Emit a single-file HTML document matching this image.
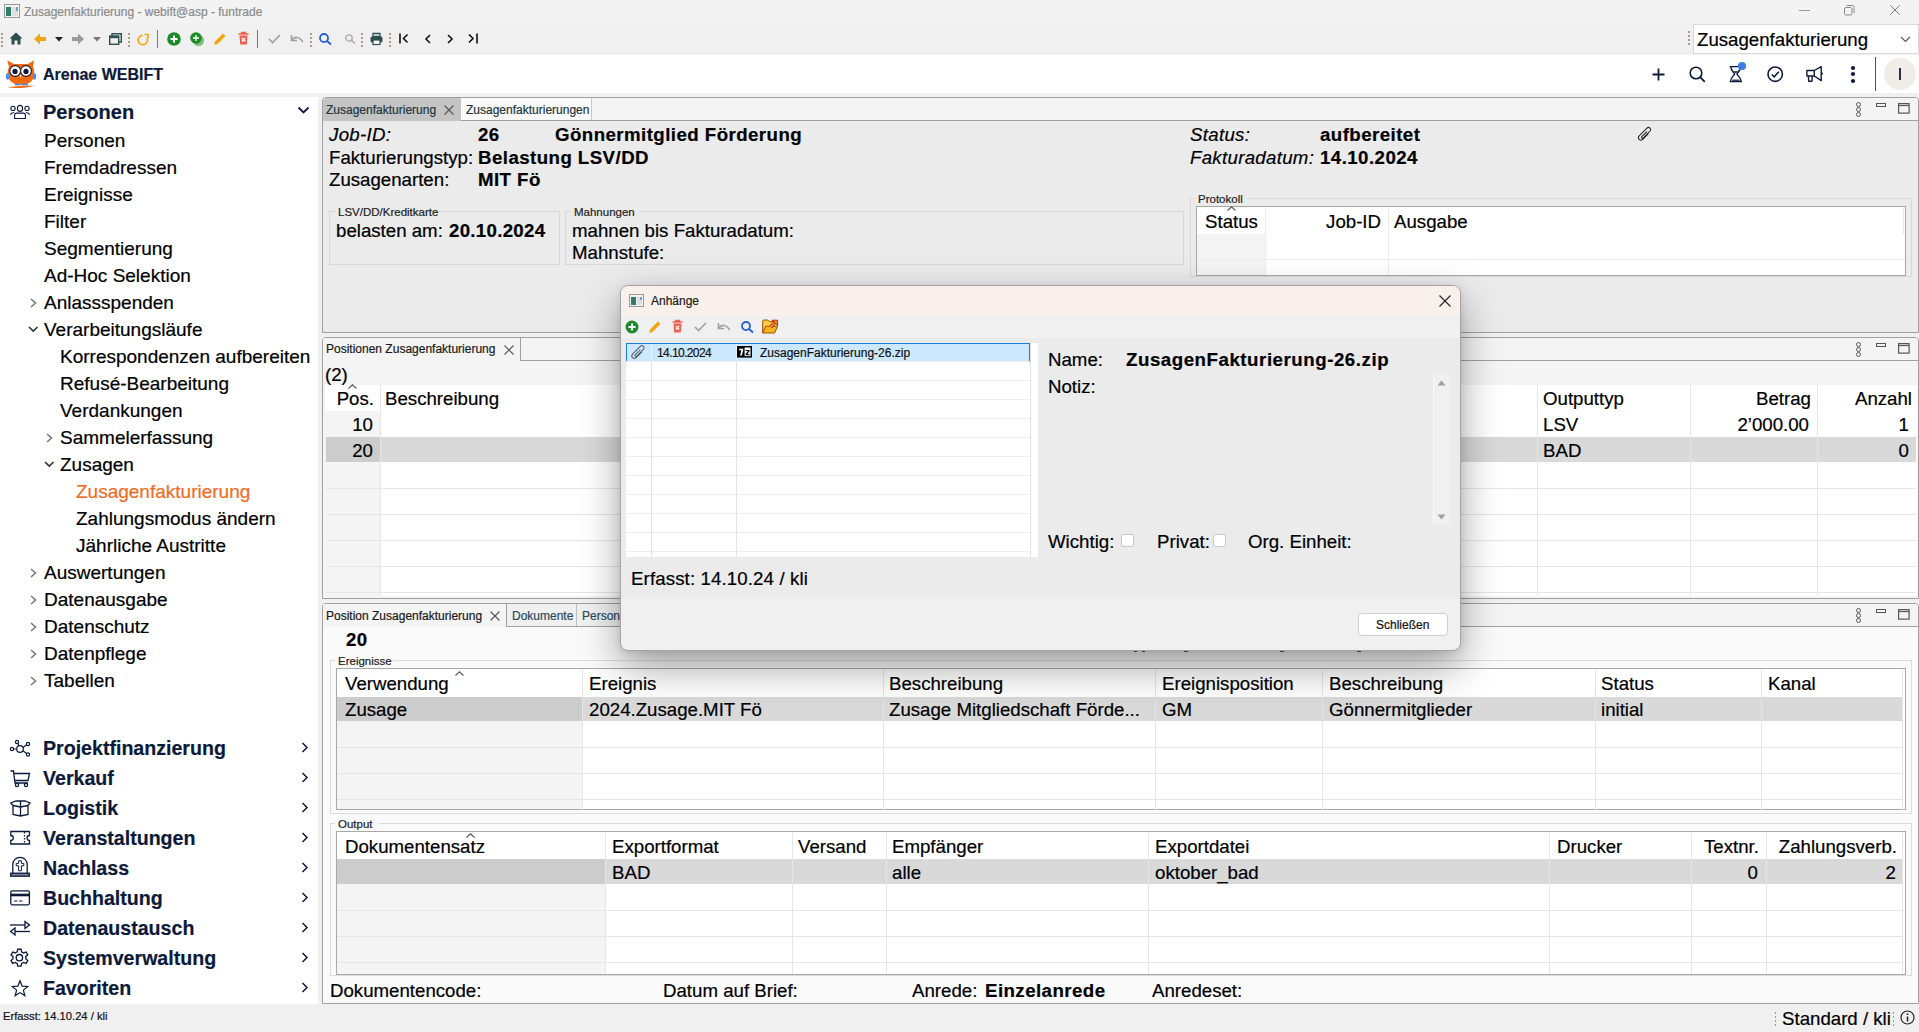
<!DOCTYPE html>
<html><head><meta charset="utf-8"><title>Zusagenfakturierung</title>
<style>
html,body{margin:0;padding:0;}
body{width:1919px;height:1032px;overflow:hidden;position:relative;background:#f0f0f0;font-family:"Liberation Sans",sans-serif;color:#000;}
.t{position:absolute;white-space:nowrap;line-height:20px;-webkit-text-stroke:0.2px currentColor;}
.r{position:absolute;}
svg.r{overflow:visible;}
</style></head><body>
<div class="r" style="left:0px;top:0px;width:1919px;height:23px;background:#f3f3f3;"></div>
<div class="r" style="left:0px;top:23px;width:1919px;height:32px;background:#f0f0f0;"></div>
<div class="r" style="left:0px;top:55px;width:1919px;height:38px;background:#ffffff;"></div>
<div class="r" style="left:0px;top:93px;width:1919px;height:4px;background:#f0f0f0;"></div>
<div class="r" style="left:0px;top:97px;width:318px;height:908px;background:#ffffff;"></div>
<div class="r" style="left:0px;top:1004px;width:1919px;height:28px;background:#f0f0f0;"></div>
<svg class="r" style="left:4px;top:4px;" width="16" height="14" viewBox="0 0 16 14"><rect x="0.5" y="0.5" width="15" height="13" fill="#f4f4f4" stroke="#999"/><rect x="2" y="3" width="5" height="9" fill="#2e7d6a"/><rect x="8" y="3" width="6" height="9" fill="#e0e0e0"/><rect x="12" y="3" width="2" height="4" fill="#6aa0d0"/></svg>
<div class="t" style="left:24px;top:2px;font-size:12px;color:#8a8a8a;">Zusagenfakturierung - webift@asp - funtrade</div>
<div class="r" style="left:1799px;top:10px;width:11px;height:1px;background:#9a9a9a;"></div>
<svg class="r" style="left:1843px;top:4px;" width="13" height="13" viewBox="0 0 13 13"><rect x="1.5" y="3.5" width="7.5" height="7.5" rx="1.5" fill="none" stroke="#8a8a8a"/><path d="M3.5 1.5H9.5a1.5 1.5 0 0 1 1.5 1.5V9" fill="none" stroke="#8a8a8a"/></svg>
<svg class="r" style="left:1890px;top:5px;" width="10" height="10" viewBox="0 0 10 10"><path d="M0.3 0.3L9.7 9.7M9.7 0.3L0.3 9.7" stroke="#7a7a7a" stroke-width="1"/></svg>
<svg class="r" style="left:10px;top:104px;" width="21" height="16" viewBox="0 0 21 16"><g fill="none" stroke="#0c1a3a" stroke-width="1.1"><circle cx="3" cy="4.4" r="2.1"/><ellipse cx="10" cy="4.4" rx="2.6" ry="3.0"/><circle cx="17" cy="4.4" r="2.1"/><path d="M0.6 10.8Q0.9 8.7 3.2 8.7H4.3"/><path d="M19.4 10.8Q19.1 8.7 16.8 8.7H15.7"/><path d="M4.6 14.5V11.2Q4.6 9.1 6.7 9.1H13.3Q15.4 9.1 15.4 11.2V14.5Z"/></g></svg>
<div class="t" style="left:43px;top:102px;font-size:20px;font-weight:700;color:#0c1a3a;">Personen</div>
<svg class="r" style="left:297px;top:106px;" width="14" height="9" viewBox="0 0 14 9"><path d="M1.5 1.5L6.5 6.5L11.5 1.5" fill="none" stroke="#0c1a3a" stroke-width="1.8"/></svg>
<div class="t" style="left:44px;top:131px;font-size:19px;">Personen</div>
<div class="t" style="left:44px;top:158px;font-size:19px;">Fremdadressen</div>
<div class="t" style="left:44px;top:185px;font-size:19px;">Ereignisse</div>
<div class="t" style="left:44px;top:212px;font-size:19px;">Filter</div>
<div class="t" style="left:44px;top:239px;font-size:19px;">Segmentierung</div>
<div class="t" style="left:44px;top:266px;font-size:19px;">Ad-Hoc Selektion</div>
<div class="t" style="left:44px;top:293px;font-size:19px;">Anlassspenden</div>
<svg class="r" style="left:30px;top:298px;" width="7.5" height="10" viewBox="0 0 7.5 10"><path d="M1 1L5.5 5.0L1 9" fill="none" stroke="#7a7a7a" stroke-width="1.6"/></svg>
<div class="t" style="left:44px;top:320px;font-size:19px;">Verarbeitungsläufe</div>
<svg class="r" style="left:28px;top:326px;" width="10.5" height="7" viewBox="0 0 10.5 7"><path d="M1 1L5.25 5L9.5 1" fill="none" stroke="#333" stroke-width="1.7"/></svg>
<div class="t" style="left:60px;top:347px;font-size:19px;">Korrespondenzen aufbereiten</div>
<div class="t" style="left:60px;top:374px;font-size:19px;">Refusé-Bearbeitung</div>
<div class="t" style="left:60px;top:401px;font-size:19px;">Verdankungen</div>
<div class="t" style="left:60px;top:428px;font-size:19px;">Sammelerfassung</div>
<svg class="r" style="left:46px;top:433px;" width="7.5" height="10" viewBox="0 0 7.5 10"><path d="M1 1L5.5 5.0L1 9" fill="none" stroke="#7a7a7a" stroke-width="1.6"/></svg>
<div class="t" style="left:60px;top:455px;font-size:19px;">Zusagen</div>
<svg class="r" style="left:44px;top:461px;" width="10.5" height="7" viewBox="0 0 10.5 7"><path d="M1 1L5.25 5L9.5 1" fill="none" stroke="#333" stroke-width="1.7"/></svg>
<div class="t" style="left:76px;top:482px;font-size:19px;color:#f26b1d;">Zusagenfakturierung</div>
<div class="t" style="left:76px;top:509px;font-size:19px;">Zahlungsmodus ändern</div>
<div class="t" style="left:76px;top:536px;font-size:19px;">Jährliche Austritte</div>
<div class="t" style="left:44px;top:563px;font-size:19px;">Auswertungen</div>
<svg class="r" style="left:30px;top:568px;" width="7.5" height="10" viewBox="0 0 7.5 10"><path d="M1 1L5.5 5.0L1 9" fill="none" stroke="#7a7a7a" stroke-width="1.6"/></svg>
<div class="t" style="left:44px;top:590px;font-size:19px;">Datenausgabe</div>
<svg class="r" style="left:30px;top:595px;" width="7.5" height="10" viewBox="0 0 7.5 10"><path d="M1 1L5.5 5.0L1 9" fill="none" stroke="#7a7a7a" stroke-width="1.6"/></svg>
<div class="t" style="left:44px;top:617px;font-size:19px;">Datenschutz</div>
<svg class="r" style="left:30px;top:622px;" width="7.5" height="10" viewBox="0 0 7.5 10"><path d="M1 1L5.5 5.0L1 9" fill="none" stroke="#7a7a7a" stroke-width="1.6"/></svg>
<div class="t" style="left:44px;top:644px;font-size:19px;">Datenpflege</div>
<svg class="r" style="left:30px;top:649px;" width="7.5" height="10" viewBox="0 0 7.5 10"><path d="M1 1L5.5 5.0L1 9" fill="none" stroke="#7a7a7a" stroke-width="1.6"/></svg>
<div class="t" style="left:44px;top:671px;font-size:19px;">Tabellen</div>
<svg class="r" style="left:30px;top:676px;" width="7.5" height="10" viewBox="0 0 7.5 10"><path d="M1 1L5.5 5.0L1 9" fill="none" stroke="#7a7a7a" stroke-width="1.6"/></svg>
<div class="t" style="left:43px;top:738px;font-size:19.6px;font-weight:700;color:#0c1a3a;">Projektfinanzierung</div>
<svg class="r" style="left:10px;top:740px;" width="21" height="18" viewBox="0 0 21 18"><g fill="none" stroke="#0c1a3a" stroke-width="1.2"><circle cx="10" cy="9" r="3.3"/><circle cx="7" cy="2" r="1.6"/><circle cx="18" cy="4" r="1.6"/><circle cx="2" cy="9" r="1.6"/><circle cx="18" cy="14.5" r="1.6"/><path d="M8 3.5L9 5.8M16.5 4.8L13 7.5M3.6 9H6.7M13 10.8L16.6 13.5"/></g></svg>
<svg class="r" style="left:301px;top:742px;" width="8" height="11" viewBox="0 0 8 11"><path d="M1.5 1L6 5.5L1.5 10" fill="none" stroke="#0c1a3a" stroke-width="1.5"/></svg>
<div class="t" style="left:43px;top:768px;font-size:19.6px;font-weight:700;color:#0c1a3a;">Verkauf</div>
<svg class="r" style="left:10px;top:770px;" width="21" height="18" viewBox="0 0 21 18"><g fill="none" stroke="#0c1a3a" stroke-width="1.3"><path d="M0.5 1H3.5L5 13H18"/><path d="M4 3.5H19.5L18 10.5H5"/><circle cx="7" cy="15" r="1.6"/><circle cx="16" cy="15" r="1.6"/></g></svg>
<svg class="r" style="left:301px;top:772px;" width="8" height="11" viewBox="0 0 8 11"><path d="M1.5 1L6 5.5L1.5 10" fill="none" stroke="#0c1a3a" stroke-width="1.5"/></svg>
<div class="t" style="left:43px;top:798px;font-size:19.6px;font-weight:700;color:#0c1a3a;">Logistik</div>
<svg class="r" style="left:10px;top:800px;" width="21" height="18" viewBox="0 0 21 18"><g fill="none" stroke="#0c1a3a" stroke-width="1.3"><path d="M3 5.5V14.5L10.5 16L18 14.5V5.5"/><path d="M10.5 7V16"/><path d="M3 5.5L0.8 3L6 1H10.5L15 1L20 3L18 5.5"/><path d="M3 5.5L10.5 7L18 5.5"/><path d="M10.5 1V7"/></g></svg>
<svg class="r" style="left:301px;top:802px;" width="8" height="11" viewBox="0 0 8 11"><path d="M1.5 1L6 5.5L1.5 10" fill="none" stroke="#0c1a3a" stroke-width="1.5"/></svg>
<div class="t" style="left:43px;top:828px;font-size:19.6px;font-weight:700;color:#0c1a3a;">Veranstaltungen</div>
<svg class="r" style="left:10px;top:830px;" width="21" height="18" viewBox="0 0 21 18"><g fill="none" stroke="#0c1a3a" stroke-width="1.3"><path d="M0.8 1.5H19.5V5.5A2.5 2.5 0 0 0 19.5 10.5V14H0.8V10.5A2.5 2.5 0 0 0 0.8 5.5Z"/><path d="M14.5 2V13.5" stroke-dasharray="1.5 1.5"/></g></svg>
<svg class="r" style="left:301px;top:832px;" width="8" height="11" viewBox="0 0 8 11"><path d="M1.5 1L6 5.5L1.5 10" fill="none" stroke="#0c1a3a" stroke-width="1.5"/></svg>
<div class="t" style="left:43px;top:858px;font-size:19.6px;font-weight:700;color:#0c1a3a;">Nachlass</div>
<svg class="r" style="left:10px;top:859px;" width="21" height="18" viewBox="0 0 21 18"><g fill="none" stroke="#0c1a3a" stroke-width="1.3"><path d="M2.8 14V5.5A7.2 7.2 0 0 1 17.2 5.5V14"/><rect x="0.7" y="14.2" width="18.6" height="3" fill="#0c1a3a" fill-opacity="0.55"/><path d="M8.6 1.8h2.8v2.6h2.4v2.4h-2.4v5h-2.8v-5H6.2V4.4h2.4z" stroke-width="1"/></g></svg>
<svg class="r" style="left:301px;top:862px;" width="8" height="11" viewBox="0 0 8 11"><path d="M1.5 1L6 5.5L1.5 10" fill="none" stroke="#0c1a3a" stroke-width="1.5"/></svg>
<div class="t" style="left:43px;top:888px;font-size:19.6px;font-weight:700;color:#0c1a3a;">Buchhaltung</div>
<svg class="r" style="left:10px;top:890px;" width="21" height="18" viewBox="0 0 21 18"><g fill="none" stroke="#0c1a3a" stroke-width="1.3"><rect x="0.8" y="0.8" width="18.6" height="14" rx="1.5"/><path d="M0.8 5H19.4" stroke-width="2.6"/><path d="M4 11H7.5M9 11H12.5" stroke-width="1"/></g></svg>
<svg class="r" style="left:301px;top:892px;" width="8" height="11" viewBox="0 0 8 11"><path d="M1.5 1L6 5.5L1.5 10" fill="none" stroke="#0c1a3a" stroke-width="1.5"/></svg>
<div class="t" style="left:43px;top:918px;font-size:19.6px;font-weight:700;color:#0c1a3a;">Datenaustausch</div>
<svg class="r" style="left:10px;top:920px;" width="21" height="18" viewBox="0 0 21 18"><g fill="none" stroke="#0c1a3a" stroke-width="1.3"><path d="M0 5H15"/><path d="M15 1.5L19.5 5L15 8.5Z"/><path d="M20 11.5H5"/><path d="M5 8L0.6 11.5L5 15Z"/></g></svg>
<svg class="r" style="left:301px;top:922px;" width="8" height="11" viewBox="0 0 8 11"><path d="M1.5 1L6 5.5L1.5 10" fill="none" stroke="#0c1a3a" stroke-width="1.5"/></svg>
<div class="t" style="left:43px;top:948px;font-size:19.6px;font-weight:700;color:#0c1a3a;">Systemverwaltung</div>
<svg class="r" style="left:10px;top:950px;" width="21" height="18" viewBox="0 0 21 18"><g fill="none" stroke="#0c1a3a" stroke-width="1.2" transform="translate(-1.6,-1.65) scale(1.1)"><path d="M8.5 0.8h3l0.5 2.4 1.8 1 2.3-0.9 1.5 2.6-1.8 1.6v2l1.8 1.6-1.5 2.6-2.3-0.9-1.8 1-0.5 2.4h-3l-0.5-2.4-1.8-1-2.3 0.9-1.5-2.6 1.8-1.6v-2L2.4 5.9 3.9 3.3l2.3 0.9 1.8-1z"/><circle cx="10" cy="8.5" r="2.9"/></g></svg>
<svg class="r" style="left:301px;top:952px;" width="8" height="11" viewBox="0 0 8 11"><path d="M1.5 1L6 5.5L1.5 10" fill="none" stroke="#0c1a3a" stroke-width="1.5"/></svg>
<div class="t" style="left:43px;top:978px;font-size:19.6px;font-weight:700;color:#0c1a3a;">Favoriten</div>
<svg class="r" style="left:10px;top:980px;" width="21" height="18" viewBox="0 0 21 18"><g fill="none" stroke="#0c1a3a" stroke-width="1.2"><path d="M10.00 0.80 L12.12 6.09 L17.80 6.47 L13.42 10.11 L14.82 15.63 L10.00 12.60 L5.18 15.63 L6.58 10.11 L2.20 6.47 L7.88 6.09Z"/></g></svg>
<svg class="r" style="left:301px;top:982px;" width="8" height="11" viewBox="0 0 8 11"><path d="M1.5 1L6 5.5L1.5 10" fill="none" stroke="#0c1a3a" stroke-width="1.5"/></svg>
<div class="r" style="left:1px;top:33px;width:2px;height:2px;background:#a89f8c;"></div>
<div class="r" style="left:1px;top:37px;width:2px;height:2px;background:#a89f8c;"></div>
<div class="r" style="left:1px;top:41px;width:2px;height:2px;background:#a89f8c;"></div>
<div class="r" style="left:1px;top:45px;width:2px;height:2px;background:#a89f8c;"></div>
<svg class="r" style="left:9px;top:32px;" width="14" height="13" viewBox="0 0 14 13"><path d="M7 0.5L0.5 6.5H2.5V12.5H5.5V8.5H8.5V12.5H11.5V6.5H13.5Z" fill="#2f4f4f"/></svg>
<svg class="r" style="left:34px;top:33px;" width="12" height="12" viewBox="0 0 12 12"><path d="M0 6L6 0.5V4H12V8H6V11.5Z" fill="#f5a30f"/></svg>
<svg class="r" style="left:55px;top:37px;" width="8" height="5" viewBox="0 0 8 5"><path d="M0 0H8L4 4.5Z" fill="#222"/></svg>
<svg class="r" style="left:72px;top:33px;" width="12" height="12" viewBox="0 0 12 12"><path d="M12 6L6 0.5V4H0V8H6V11.5Z" fill="#9a9a9a"/></svg>
<svg class="r" style="left:93px;top:37px;" width="8" height="5" viewBox="0 0 8 5"><path d="M0 0H8L4 4.5Z" fill="#777"/></svg>
<svg class="r" style="left:109px;top:33px;" width="13" height="12" viewBox="0 0 13 12"><g fill="none" stroke="#2f4f4f" stroke-width="1.4"><rect x="0.7" y="3" width="9" height="8.3"/><path d="M3 3V0.7H12.3V9H9.7"/></g><rect x="0.7" y="3" width="9" height="2.2" fill="#2f4f4f"/></svg>
<div class="r" style="left:128px;top:33px;width:2px;height:2px;background:#a89f8c;"></div>
<div class="r" style="left:128px;top:37px;width:2px;height:2px;background:#a89f8c;"></div>
<div class="r" style="left:128px;top:41px;width:2px;height:2px;background:#a89f8c;"></div>
<div class="r" style="left:128px;top:45px;width:2px;height:2px;background:#a89f8c;"></div>
<svg class="r" style="left:137px;top:33px;" width="13" height="13" viewBox="0 0 13 13"><path d="M5.8 2.3A4.7 4.7 0 1 0 9.9 4.7" fill="none" stroke="#f5a30f" stroke-width="1.5"/><path d="M7.6 1.5H11V4.9" fill="none" stroke="#f5a30f" stroke-width="1.5"/></svg>
<div class="r" style="left:157px;top:30px;width:1px;height:18px;background:#777;"></div>
<svg class="r" style="left:167px;top:32px;" width="14" height="14" viewBox="0 0 14 14"><circle cx="7" cy="7" r="6.8" fill="#1e8a2a"/><path d="M7 3.5V10.5M3.5 7H10.5" stroke="#fff" stroke-width="2"/></svg>
<svg class="r" style="left:190px;top:32px;" width="14" height="14" viewBox="0 0 14 14"><circle cx="8.5" cy="8.5" r="5.5" fill="#7cbf7c"/><circle cx="6" cy="6" r="5.8" fill="#1e8a2a"/><path d="M6 3V9M3 6H9" stroke="#fff" stroke-width="1.3"/></svg>
<svg class="r" style="left:213px;top:32px;" width="14" height="14" viewBox="0 0 14 14"><path d="M1 13L2 9.5L10 1.5L12.5 4L4.5 12Z" fill="#f5a30f"/></svg>
<svg class="r" style="left:238px;top:32px;" width="11" height="13" viewBox="0 0 11 13"><path d="M0.5 2H10.5M3.5 2V0.5H7.5V2" stroke="#f06050" stroke-width="1.3" fill="none"/><path d="M1.5 3.5H9.5L8.8 12.5H2.2Z" fill="#f06050"/><path d="M3.8 6L7.2 9.5M7.2 6L3.8 9.5" stroke="#fff" stroke-width="1.1"/></svg>
<div class="r" style="left:257px;top:30px;width:1px;height:18px;background:#777;"></div>
<svg class="r" style="left:268px;top:34px;" width="13" height="10" viewBox="0 0 13 10"><path d="M1 5L4.5 8.5L12 1" fill="none" stroke="#a0a0a0" stroke-width="1.6"/></svg>
<svg class="r" style="left:290px;top:34px;" width="14" height="10" viewBox="0 0 14 10"><path d="M1.5 1V6.5H7" fill="none" stroke="#a0a0a0" stroke-width="1.6"/><path d="M2 6C4 2.5 9.5 2 12.8 8" fill="none" stroke="#a0a0a0" stroke-width="1.6"/></svg>
<div class="r" style="left:310px;top:33px;width:2px;height:2px;background:#a89f8c;"></div>
<div class="r" style="left:310px;top:37px;width:2px;height:2px;background:#a89f8c;"></div>
<div class="r" style="left:310px;top:41px;width:2px;height:2px;background:#a89f8c;"></div>
<div class="r" style="left:310px;top:45px;width:2px;height:2px;background:#a89f8c;"></div>
<svg class="r" style="left:319px;top:33px;" width="13" height="12" viewBox="0 0 13 12"><circle cx="5" cy="5" r="4" fill="none" stroke="#2a5fd8" stroke-width="1.8"/><path d="M8 8L12 11.5" stroke="#2a5fd8" stroke-width="2"/></svg>
<svg class="r" style="left:345px;top:34px;" width="11" height="10" viewBox="0 0 11 10"><circle cx="4" cy="4" r="3.2" fill="none" stroke="#a8a8a8" stroke-width="1.3"/><path d="M6.5 6.5L10 9.5" stroke="#a8a8a8" stroke-width="1.5"/></svg>
<div class="r" style="left:361px;top:33px;width:2px;height:2px;background:#a89f8c;"></div>
<div class="r" style="left:361px;top:37px;width:2px;height:2px;background:#a89f8c;"></div>
<div class="r" style="left:361px;top:41px;width:2px;height:2px;background:#a89f8c;"></div>
<div class="r" style="left:361px;top:45px;width:2px;height:2px;background:#a89f8c;"></div>
<svg class="r" style="left:370px;top:33px;" width="13" height="12" viewBox="0 0 13 12"><path d="M3 0.5H10V3.5H3Z" fill="none" stroke="#2f4f4f" stroke-width="1.3"/><rect x="0.5" y="3.5" width="12" height="6" rx="1.5" fill="#2f4f4f"/><rect x="3" y="7" width="7" height="4.5" fill="#fff" stroke="#2f4f4f" stroke-width="1.2"/></svg>
<div class="r" style="left:389px;top:33px;width:2px;height:2px;background:#a89f8c;"></div>
<div class="r" style="left:389px;top:37px;width:2px;height:2px;background:#a89f8c;"></div>
<div class="r" style="left:389px;top:41px;width:2px;height:2px;background:#a89f8c;"></div>
<div class="r" style="left:389px;top:45px;width:2px;height:2px;background:#a89f8c;"></div>
<svg class="r" style="left:399px;top:33px;" width="10" height="11" viewBox="0 0 10 11"><path d="M1 0.5V10.5" stroke="#111" stroke-width="1.6"/><path d="M8.5 1.5L4.5 5.5L8.5 9.5" fill="none" stroke="#111" stroke-width="1.6"/></svg>
<svg class="r" style="left:424px;top:34px;" width="7" height="10" viewBox="0 0 7 10"><path d="M6 1L2 5L6 9" fill="none" stroke="#111" stroke-width="1.6"/></svg>
<svg class="r" style="left:447px;top:34px;" width="7" height="10" viewBox="0 0 7 10"><path d="M1 1L5 5L1 9" fill="none" stroke="#111" stroke-width="1.6"/></svg>
<svg class="r" style="left:468px;top:33px;" width="11" height="11" viewBox="0 0 11 11"><path d="M1 1.5L5 5.5L1 9.5" fill="none" stroke="#111" stroke-width="1.6"/><path d="M9 0.5V10.5" stroke="#111" stroke-width="1.6"/></svg>
<div class="r" style="left:1688px;top:31px;width:2px;height:2px;background:#a89f8c;"></div>
<div class="r" style="left:1688px;top:35px;width:2px;height:2px;background:#a89f8c;"></div>
<div class="r" style="left:1688px;top:39px;width:2px;height:2px;background:#a89f8c;"></div>
<div class="r" style="left:1688px;top:43px;width:2px;height:2px;background:#a89f8c;"></div>
<div class="r" style="left:1693px;top:24px;width:226px;height:30px;background:#ffffff;border:1px solid #d9d9d9;box-sizing:border-box;"></div>
<div class="t" style="left:1697px;top:30px;font-size:18.67px;">Zusagenfakturierung</div>
<svg class="r" style="left:1900px;top:36px;" width="11" height="7" viewBox="0 0 11 7"><path d="M1 1L5.5 5.5L10 1" fill="none" stroke="#555" stroke-width="1.1"/></svg>
<svg class="r" style="left:6px;top:59px;" width="30" height="30" viewBox="0 0 30 30">
<path d="M1.2 1.2L8 5H22L28 1.2L27 8C29 12 28.6 18 26.2 21.2C23.6 24.6 19 26 15 26C11 26 6.4 24.6 3.8 21.2C1.4 18 1 12 3 8Z" fill="#f26b11"/>
<ellipse cx="1.6" cy="17.5" rx="1.7" ry="3.3" fill="#4a8df0"/><ellipse cx="28.4" cy="17.5" rx="1.7" ry="3.3" fill="#4a8df0"/>
<circle cx="9.2" cy="12" r="5.4" fill="#fff" stroke="#1a1a30" stroke-width="1.1"/><circle cx="20" cy="12" r="5.4" fill="#fff" stroke="#1a1a30" stroke-width="1.1"/>
<circle cx="9" cy="12.4" r="2.6" fill="#0c1a3a"/><circle cx="20" cy="12.4" r="2.6" fill="#0c1a3a"/>
<path d="M13.6 16.2L14.6 19L15.6 16.2Z" fill="#fff"/>
<rect x="9" y="24.6" width="5" height="1.8" fill="#4a8df0"/><rect x="16" y="24.6" width="6" height="1.8" fill="#4a8df0"/>
<path d="M1 28.6C8 26.8 20 26.4 29 26.8C21 29 9 29.6 1 28.6Z" fill="#f26b11"/>
</svg>
<div class="t" style="left:43px;top:65px;font-size:16px;font-weight:700;color:#0c1a3a;">Arenae WEBIFT</div>
<svg class="r" style="left:1652px;top:68px;" width="13" height="13" viewBox="0 0 13 13"><path d="M6.5 0.5V12.5M0.5 6.5H12.5" stroke="#0c1a3a" stroke-width="1.8"/></svg>
<svg class="r" style="left:1689px;top:66px;" width="17" height="17" viewBox="0 0 17 17"><circle cx="7" cy="7" r="5.8" fill="none" stroke="#0c1a3a" stroke-width="1.6"/><path d="M11.2 11.2L15.8 15.8" stroke="#0c1a3a" stroke-width="1.8"/></svg>
<svg class="r" style="left:1729px;top:62px;" width="20" height="21" viewBox="0 0 20 21"><g fill="none" stroke="#0c1a3a" stroke-width="1.4"><path d="M0.8 4.6H12.5M0.8 19.6H13"/><path d="M1.8 4.6C2 9 5.3 10.6 5.6 12C5.3 13.4 2 15 1.3 19.6M11.6 4.6C11.4 9 8.3 10.6 8 12C8.3 13.4 11.6 15 12.3 19.6"/></g><path d="M4.3 9.3H9.3L6.8 11.3Z" fill="#0c1a3a"/><path d="M3 19H10.8L10.4 17.6H3.4Z" fill="#0c1a3a" fill-opacity="0.8"/><circle cx="13" cy="4" r="4.1" fill="#3b7fe6"/></svg>
<svg class="r" style="left:1767px;top:66px;" width="17" height="17" viewBox="0 0 17 17"><circle cx="8.2" cy="8.2" r="7.2" fill="none" stroke="#0c1a3a" stroke-width="1.6"/><path d="M4.8 8.5L7.2 10.8L11.8 5.8" fill="none" stroke="#0c1a3a" stroke-width="1.6"/></svg>
<svg class="r" style="left:1806px;top:66px;" width="18" height="17" viewBox="0 0 18 17"><g fill="none" stroke="#0c1a3a" stroke-width="1.4" stroke-linejoin="round"><path d="M0.9 4.5H8.3V10H0.9Z"/><path d="M8.3 4.5L15.2 0.7V14.7L8.3 10"/><path d="M2.4 10L2.7 15.2H6L6.2 10"/></g><circle cx="15.9" cy="7.6" r="1.1" fill="#0c1a3a"/></svg>
<svg class="r" style="left:1850px;top:64.6px;" width="6" height="6" viewBox="0 0 6 6"><circle cx="3" cy="3" r="2.1" fill="#0c1a3a"/></svg>
<svg class="r" style="left:1850px;top:71.19999999999999px;" width="6" height="6" viewBox="0 0 6 6"><circle cx="3" cy="3" r="2.1" fill="#0c1a3a"/></svg>
<svg class="r" style="left:1850px;top:77.8px;" width="6" height="6" viewBox="0 0 6 6"><circle cx="3" cy="3" r="2.1" fill="#0c1a3a"/></svg>
<div class="r" style="left:1875px;top:57px;width:1px;height:34px;background:#555;"></div>
<svg class="r" style="left:1884px;top:58px;" width="32" height="32" viewBox="0 0 32 32"><circle cx="16" cy="16" r="16" fill="#f0ede8"/><path d="M16 10V22" stroke="#0c1a3a" stroke-width="1.8"/></svg>
<div class="r" style="left:322px;top:97px;width:1597px;height:236px;background:#ebebeb;border:1px solid #a0a0a0;box-sizing:border-box;border-top-left-radius:4px;border-top-right-radius:4px;"></div>
<div class="r" style="left:323px;top:98px;width:1595px;height:22px;background:#f4f4f4;border-top-left-radius:3px;border-top-right-radius:3px;"></div>
<div class="r" style="left:323px;top:120px;width:1595px;height:1px;background:#a0a0a0;"></div>
<div class="r" style="left:323px;top:98px;width:138px;height:23px;background:#c4c4c4;border-top-left-radius:3px;"></div>
<div class="t" style="left:326px;top:100px;font-size:12px;color:#1d3640;">Zusagenfakturierung</div>
<svg class="r" style="left:444px;top:105px;" width="10" height="10" viewBox="0 0 10 10"><path d="M0.5 0.5L9.5 9.5M9.5 0.5L0.5 9.5" stroke="#555" stroke-width="1.1"/></svg>
<div class="r" style="left:461px;top:98px;width:131px;height:22px;background:#fafafa;border-right:1px solid #c8c8c8;box-sizing:border-box;"></div>
<div class="t" style="left:466px;top:100px;font-size:12px;color:#1d3640;">Zusagenfakturierungen</div>
<svg class="r" style="left:1855px;top:102px;" width="8" height="16" viewBox="0 0 8 16"><g fill="none" stroke="#555" stroke-width="1"><circle cx="3.5" cy="2.5" r="2"/><circle cx="3.5" cy="7.5" r="2"/><circle cx="3.5" cy="12.5" r="2"/></g></svg>
<div class="r" style="left:1876px;top:103px;width:10px;height:4px;border:1.2px solid #555;box-sizing:border-box;"></div>
<svg class="r" style="left:1898px;top:103px;" width="12" height="11" viewBox="0 0 12 11"><g fill="none" stroke="#555" stroke-width="1.2"><rect x="0.6" y="0.6" width="10.5" height="9.5"/><path d="M0.6 2.5H11"/></g></svg>
<div class="t" style="left:329px;top:125px;font-size:18.67px;font-style:italic;letter-spacing:0.3px;">Job-ID:</div>
<div class="t" style="left:478px;top:125px;font-size:18.67px;font-weight:700;letter-spacing:0.45px;">26</div>
<div class="t" style="left:555px;top:125px;font-size:18.67px;font-weight:700;letter-spacing:0.45px;">Gönnermitglied Förderung</div>
<div class="t" style="left:329px;top:148px;font-size:18.67px;">Fakturierungstyp:</div>
<div class="t" style="left:478px;top:148px;font-size:18.67px;font-weight:700;letter-spacing:0.45px;">Belastung LSV/DD</div>
<div class="t" style="left:329px;top:170px;font-size:18.67px;">Zusagenarten:</div>
<div class="t" style="left:478px;top:170px;font-size:18.67px;font-weight:700;letter-spacing:0.45px;">MIT Fö</div>
<div class="t" style="left:1190px;top:125px;font-size:18.67px;font-style:italic;letter-spacing:0.3px;">Status:</div>
<div class="t" style="left:1320px;top:125px;font-size:18.67px;font-weight:700;letter-spacing:0.45px;">aufbereitet</div>
<div class="t" style="left:1190px;top:148px;font-size:18.67px;font-style:italic;letter-spacing:0.3px;">Fakturadatum:</div>
<div class="t" style="left:1320px;top:148px;font-size:18.67px;font-weight:700;letter-spacing:0.45px;">14.10.2024</div>
<svg class="r" style="left:1636px;top:125px;" width="16" height="16" viewBox="0 0 16 16"><g transform="translate(8.6,8.8) rotate(-45) scale(0.86)"><path d="M3.2 3.1H-6.2A2.9 2.9 0 0 1 -6.2 -2.7H6.6A2.5 2.5 0 0 1 6.6 2.3H-4.7A1.1 1.1 0 0 1 -4.7 0.1H3.8" fill="none" stroke="#222" stroke-width="1.15"/></g></svg>
<div class="r" style="left:329px;top:211px;width:231px;height:54px;border:1px solid #d8d8d8;box-sizing:border-box;"></div>
<div class="r" style="left:336px;top:206px;width:68px;height:12px;background:#ebebeb;"></div>
<div class="t" style="left:338px;top:202px;font-size:11.5px;color:#222;">LSV/DD/Kreditkarte</div>
<div class="t" style="left:336px;top:221px;font-size:18.67px;">belasten am:</div>
<div class="t" style="left:449px;top:221px;font-size:18.67px;font-weight:700;letter-spacing:0.3px;">20.10.2024</div>
<div class="r" style="left:565px;top:211px;width:619px;height:54px;border:1px solid #d8d8d8;box-sizing:border-box;"></div>
<div class="r" style="left:571px;top:206px;width:68px;height:12px;background:#ebebeb;"></div>
<div class="t" style="left:574px;top:202px;font-size:11.5px;color:#222;">Mahnungen</div>
<div class="t" style="left:572px;top:221px;font-size:18.67px;">mahnen bis Fakturadatum:</div>
<div class="t" style="left:572px;top:243px;font-size:18.67px;">Mahnstufe:</div>
<div class="r" style="left:1190px;top:198px;width:722px;height:79px;border:1px solid #d8d8d8;box-sizing:border-box;"></div>
<div class="r" style="left:1195px;top:193px;width:52px;height:12px;background:#ebebeb;"></div>
<div class="t" style="left:1198px;top:189px;font-size:11.5px;color:#222;">Protokoll</div>
<div class="r" style="left:1196px;top:206px;width:710px;height:70px;background:#ffffff;border:1px solid #a8a8a8;box-sizing:border-box;"></div>
<div class="r" style="left:1197px;top:234px;width:69px;height:41px;background:#f4f4f4;"></div>
<div class="r" style="left:1265px;top:207px;width:1px;height:68px;background:#ececec;"></div>
<div class="r" style="left:1388px;top:207px;width:1px;height:68px;background:#ececec;"></div>
<div class="r" style="left:1903px;top:207px;width:1px;height:27px;background:#ececec;"></div>
<div class="r" style="left:1197px;top:259px;width:708px;height:1px;background:#ececec;"></div>
<svg class="r" style="left:1227px;top:206px;" width="9" height="5" viewBox="0 0 9 5"><path d="M0.5 4.5L4.5 0.8L8.5 4.5" fill="none" stroke="#555" stroke-width="1.1"/></svg>
<div class="t" style="left:1205px;top:212px;font-size:18.67px;">Status</div>
<div class="t" style="right:538px;top:212px;font-size:18.67px;">Job-ID</div>
<div class="t" style="left:1394px;top:212px;font-size:18.67px;">Ausgabe</div>
<div class="r" style="left:322px;top:337px;width:1597px;height:262px;background:#f4f4f4;border:1px solid #a0a0a0;box-sizing:border-box;border-top-left-radius:4px;border-top-right-radius:4px;"></div>
<div class="r" style="left:323px;top:338px;width:1595px;height:22px;background:#f4f4f4;border-top-left-radius:3px;border-top-right-radius:3px;"></div>
<div class="r" style="left:520px;top:360px;width:1398px;height:1px;background:#a0a0a0;"></div>
<div class="r" style="left:323px;top:338px;width:198px;height:22px;background:#f4f4f4;border-right:1px solid #a0a0a0;box-sizing:border-box;border-top-left-radius:3px;"></div>
<div class="t" style="left:326px;top:339px;font-size:12px;color:#1a1a1a;">Positionen Zusagenfakturierung</div>
<svg class="r" style="left:504px;top:345px;" width="10" height="10" viewBox="0 0 10 10"><path d="M0.5 0.5L9.5 9.5M9.5 0.5L0.5 9.5" stroke="#555" stroke-width="1.1"/></svg>
<svg class="r" style="left:1855px;top:342px;" width="8" height="16" viewBox="0 0 8 16"><g fill="none" stroke="#555" stroke-width="1"><circle cx="3.5" cy="2.5" r="2"/><circle cx="3.5" cy="7.5" r="2"/><circle cx="3.5" cy="12.5" r="2"/></g></svg>
<div class="r" style="left:1876px;top:343px;width:10px;height:4px;border:1.2px solid #555;box-sizing:border-box;"></div>
<svg class="r" style="left:1898px;top:343px;" width="12" height="11" viewBox="0 0 12 11"><g fill="none" stroke="#555" stroke-width="1.2"><rect x="0.6" y="0.6" width="10.5" height="9.5"/><path d="M0.6 2.5H11"/></g></svg>
<div class="t" style="left:325px;top:365px;font-size:18.67px;">(2)</div>
<div class="r" style="left:325px;top:385px;width:1592px;height:211px;background:#ffffff;"></div>
<div class="r" style="left:325px;top:411px;width:55px;height:185px;background:#f4f4f4;"></div>
<div class="r" style="left:326px;top:437px;width:1590px;height:25px;background:#d9d9d9;"></div>
<div class="r" style="left:326px;top:437px;width:54px;height:25px;background:#cccccc;"></div>
<div class="r" style="left:380px;top:385px;width:1px;height:211px;background:#e6e6e6;"></div>
<div class="r" style="left:1537px;top:385px;width:1px;height:211px;background:#e6e6e6;"></div>
<div class="r" style="left:1690px;top:385px;width:1px;height:211px;background:#e6e6e6;"></div>
<div class="r" style="left:1817px;top:385px;width:1px;height:211px;background:#e6e6e6;"></div>
<div class="r" style="left:326px;top:488px;width:1590px;height:1px;background:#e6e6e6;"></div>
<div class="r" style="left:326px;top:514px;width:1590px;height:1px;background:#e6e6e6;"></div>
<div class="r" style="left:326px;top:540px;width:1590px;height:1px;background:#e6e6e6;"></div>
<div class="r" style="left:326px;top:566px;width:1590px;height:1px;background:#e6e6e6;"></div>
<div class="r" style="left:326px;top:592px;width:1590px;height:1px;background:#e6e6e6;"></div>
<svg class="r" style="left:348px;top:384px;" width="9" height="5" viewBox="0 0 9 5"><path d="M0.5 4.5L4.5 0.8L8.5 4.5" fill="none" stroke="#555" stroke-width="1.1"/></svg>
<div class="t" style="right:1545px;top:389px;font-size:18.67px;">Pos.</div>
<div class="t" style="left:385px;top:389px;font-size:18.67px;">Beschreibung</div>
<div class="t" style="left:1543px;top:389px;font-size:18.67px;">Outputtyp</div>
<div class="t" style="right:108px;top:389px;font-size:18.67px;">Betrag</div>
<div class="t" style="right:7px;top:389px;font-size:18.67px;">Anzahl</div>
<div class="t" style="right:1546px;top:415px;font-size:18.67px;">10</div>
<div class="t" style="left:1543px;top:415px;font-size:18.67px;">LSV</div>
<div class="t" style="right:110px;top:415px;font-size:18.67px;">2’000.00</div>
<div class="t" style="right:10px;top:415px;font-size:18.67px;">1</div>
<div class="t" style="right:1546px;top:441px;font-size:18.67px;">20</div>
<div class="t" style="left:1543px;top:441px;font-size:18.67px;">BAD</div>
<div class="t" style="right:10px;top:441px;font-size:18.67px;">0</div>
<div class="r" style="left:322px;top:603px;width:1597px;height:401px;background:#fafafa;border:1px solid #a0a0a0;box-sizing:border-box;border-top-left-radius:4px;border-top-right-radius:4px;"></div>
<div class="r" style="left:323px;top:604px;width:1595px;height:22px;background:#f4f4f4;border-top-left-radius:3px;border-top-right-radius:3px;"></div>
<div class="r" style="left:507px;top:626px;width:1411px;height:1px;background:#a0a0a0;"></div>
<div class="r" style="left:323px;top:604px;width:184px;height:23px;background:#f4f4f4;border-right:1px solid #a0a0a0;box-sizing:border-box;border-top-left-radius:3px;"></div>
<div class="t" style="left:326px;top:606px;font-size:12px;color:#1a1a1a;">Position Zusagenfakturierung</div>
<svg class="r" style="left:490px;top:611px;" width="10" height="10" viewBox="0 0 10 10"><path d="M0.5 0.5L9.5 9.5M9.5 0.5L0.5 9.5" stroke="#555" stroke-width="1.1"/></svg>
<div class="r" style="left:507px;top:604px;width:70px;height:22px;background:#f0f0f0;border-right:1px solid #c0c0c0;box-sizing:border-box;"></div>
<div class="t" style="left:512px;top:606px;font-size:12px;color:#2a4a5a;">Dokumente</div>
<div class="r" style="left:577px;top:604px;width:70px;height:22px;background:#f0f0f0;border-right:1px solid #c0c0c0;box-sizing:border-box;"></div>
<div class="t" style="left:582px;top:606px;font-size:12px;color:#2a4a5a;">Personen</div>
<svg class="r" style="left:1855px;top:608px;" width="8" height="16" viewBox="0 0 8 16"><g fill="none" stroke="#555" stroke-width="1"><circle cx="3.5" cy="2.5" r="2"/><circle cx="3.5" cy="7.5" r="2"/><circle cx="3.5" cy="12.5" r="2"/></g></svg>
<div class="r" style="left:1876px;top:609px;width:10px;height:4px;border:1.2px solid #555;box-sizing:border-box;"></div>
<svg class="r" style="left:1898px;top:609px;" width="12" height="11" viewBox="0 0 12 11"><g fill="none" stroke="#555" stroke-width="1.2"><rect x="0.6" y="0.6" width="10.5" height="9.5"/><path d="M0.6 2.5H11"/></g></svg>
<div class="t" style="left:346px;top:630px;font-size:18.67px;font-weight:700;letter-spacing:0.45px;">20</div>
<div class="r" style="left:1134px;top:651px;width:3px;height:1px;background:#555;"></div>
<div class="r" style="left:1142px;top:651px;width:3px;height:1px;background:#555;"></div>
<div class="r" style="left:1184px;top:651px;width:4px;height:1px;background:#555;"></div>
<div class="r" style="left:1280px;top:651px;width:4px;height:1px;background:#555;"></div>
<div class="r" style="left:1357px;top:651px;width:4px;height:1px;background:#555;"></div>
<div class="r" style="left:330px;top:660px;width:1582px;height:154px;border:1px solid #dcdcdc;box-sizing:border-box;"></div>
<div class="r" style="left:335px;top:655px;width:58px;height:12px;background:#fafafa;"></div>
<div class="t" style="left:338px;top:651px;font-size:11.5px;color:#222;">Ereignisse</div>
<div class="r" style="left:336px;top:668px;width:1570px;height:142px;background:#ffffff;border:1px solid #a8a8a8;box-sizing:border-box;"></div>
<div class="r" style="left:337px;top:721px;width:245px;height:88px;background:#f4f4f4;"></div>
<div class="r" style="left:337px;top:697px;width:1566px;height:24px;background:#d9d9d9;"></div>
<div class="r" style="left:337px;top:697px;width:245px;height:24px;background:#cccccc;"></div>
<div class="r" style="left:582px;top:670px;width:1px;height:140px;background:#e6e6e6;"></div>
<div class="r" style="left:883px;top:670px;width:1px;height:140px;background:#e6e6e6;"></div>
<div class="r" style="left:1155px;top:670px;width:1px;height:140px;background:#e6e6e6;"></div>
<div class="r" style="left:1322px;top:670px;width:1px;height:140px;background:#e6e6e6;"></div>
<div class="r" style="left:1595px;top:670px;width:1px;height:140px;background:#e6e6e6;"></div>
<div class="r" style="left:1761px;top:670px;width:1px;height:140px;background:#e6e6e6;"></div>
<div class="r" style="left:1902px;top:670px;width:1px;height:140px;background:#e6e6e6;"></div>
<div class="r" style="left:337px;top:747px;width:1566px;height:1px;background:#e6e6e6;"></div>
<div class="r" style="left:337px;top:773px;width:1566px;height:1px;background:#e6e6e6;"></div>
<div class="r" style="left:337px;top:799px;width:1566px;height:1px;background:#e6e6e6;"></div>
<svg class="r" style="left:455px;top:671px;" width="9" height="5" viewBox="0 0 9 5"><path d="M0.5 4.5L4.5 0.8L8.5 4.5" fill="none" stroke="#555" stroke-width="1.1"/></svg>
<div class="t" style="left:345px;top:674px;font-size:18.67px;">Verwendung</div>
<div class="t" style="left:589px;top:674px;font-size:18.67px;">Ereignis</div>
<div class="t" style="left:889px;top:674px;font-size:18.67px;">Beschreibung</div>
<div class="t" style="left:1162px;top:674px;font-size:18.67px;">Ereignisposition</div>
<div class="t" style="left:1329px;top:674px;font-size:18.67px;">Beschreibung</div>
<div class="t" style="left:1601px;top:674px;font-size:18.67px;">Status</div>
<div class="t" style="left:1768px;top:674px;font-size:18.67px;">Kanal</div>
<div class="t" style="left:345px;top:700px;font-size:18.67px;">Zusage</div>
<div class="t" style="left:589px;top:700px;font-size:18.67px;">2024.Zusage.MIT Fö</div>
<div class="t" style="left:889px;top:700px;font-size:18.67px;">Zusage Mitgliedschaft Förde...</div>
<div class="t" style="left:1162px;top:700px;font-size:18.67px;">GM</div>
<div class="t" style="left:1329px;top:700px;font-size:18.67px;">Gönnermitglieder</div>
<div class="t" style="left:1601px;top:700px;font-size:18.67px;">initial</div>
<div class="r" style="left:330px;top:823px;width:1582px;height:153px;border:1px solid #dcdcdc;box-sizing:border-box;"></div>
<div class="r" style="left:335px;top:818px;width:44px;height:12px;background:#fafafa;"></div>
<div class="t" style="left:338px;top:814px;font-size:11.5px;color:#222;">Output</div>
<div class="r" style="left:336px;top:831px;width:1570px;height:144px;background:#ffffff;border:1px solid #a8a8a8;box-sizing:border-box;"></div>
<div class="r" style="left:337px;top:884px;width:268px;height:90px;background:#f4f4f4;"></div>
<div class="r" style="left:337px;top:859px;width:1566px;height:25px;background:#d9d9d9;"></div>
<div class="r" style="left:337px;top:859px;width:268px;height:25px;background:#cccccc;"></div>
<div class="r" style="left:605px;top:833px;width:1px;height:141px;background:#e6e6e6;"></div>
<div class="r" style="left:792px;top:833px;width:1px;height:141px;background:#e6e6e6;"></div>
<div class="r" style="left:886px;top:833px;width:1px;height:141px;background:#e6e6e6;"></div>
<div class="r" style="left:1148px;top:833px;width:1px;height:141px;background:#e6e6e6;"></div>
<div class="r" style="left:1549px;top:833px;width:1px;height:141px;background:#e6e6e6;"></div>
<div class="r" style="left:1691px;top:833px;width:1px;height:141px;background:#e6e6e6;"></div>
<div class="r" style="left:1766px;top:833px;width:1px;height:141px;background:#e6e6e6;"></div>
<div class="r" style="left:1902px;top:833px;width:1px;height:141px;background:#e6e6e6;"></div>
<div class="r" style="left:337px;top:910px;width:1566px;height:1px;background:#e6e6e6;"></div>
<div class="r" style="left:337px;top:936px;width:1566px;height:1px;background:#e6e6e6;"></div>
<div class="r" style="left:337px;top:962px;width:1566px;height:1px;background:#e6e6e6;"></div>
<svg class="r" style="left:466px;top:833px;" width="9" height="5" viewBox="0 0 9 5"><path d="M0.5 4.5L4.5 0.8L8.5 4.5" fill="none" stroke="#555" stroke-width="1.1"/></svg>
<div class="t" style="left:345px;top:837px;font-size:18.67px;">Dokumentensatz</div>
<div class="t" style="left:612px;top:837px;font-size:18.67px;">Exportformat</div>
<div class="t" style="left:798px;top:837px;font-size:18.67px;">Versand</div>
<div class="t" style="left:892px;top:837px;font-size:18.67px;">Empfänger</div>
<div class="t" style="left:1155px;top:837px;font-size:18.67px;">Exportdatei</div>
<div class="t" style="left:1557px;top:837px;font-size:18.67px;">Drucker</div>
<div class="t" style="right:160px;top:837px;font-size:18.67px;">Textnr.</div>
<div class="t" style="right:22px;top:837px;font-size:18.67px;">Zahlungsverb.</div>
<div class="t" style="left:612px;top:863px;font-size:18.67px;">BAD</div>
<div class="t" style="left:892px;top:863px;font-size:18.67px;">alle</div>
<div class="t" style="left:1155px;top:863px;font-size:18.67px;">oktober_bad</div>
<div class="t" style="right:161px;top:863px;font-size:18.67px;">0</div>
<div class="t" style="right:23px;top:863px;font-size:18.67px;">2</div>
<div class="t" style="left:330px;top:981px;font-size:18.67px;">Dokumentencode:</div>
<div class="t" style="left:663px;top:981px;font-size:18.67px;">Datum auf Brief:</div>
<div class="t" style="left:912px;top:981px;font-size:18.67px;">Anrede:</div>
<div class="t" style="left:985px;top:981px;font-size:18.67px;font-weight:700;letter-spacing:0.45px;">Einzelanrede</div>
<div class="t" style="left:1152px;top:981px;font-size:18.67px;">Anredeset:</div>
<div class="r" style="left:620px;top:285px;width:841px;height:366px;background:#f0f0f0;border:1px solid #a4a4a4;box-sizing:border-box;border-radius:8px;box-shadow:0 16px 40px rgba(0,0,0,0.36),0 2px 8px rgba(0,0,0,0.10);overflow:hidden;"></div>
<div class="r" style="left:621px;top:286px;width:839px;height:30px;background:#f9f0eb;border-top-left-radius:7px;border-top-right-radius:7px;"></div>
<svg class="r" style="left:629px;top:294px;" width="15" height="13" viewBox="0 0 15 13"><rect x="0.5" y="0.5" width="14" height="12" fill="#f4f4f4" stroke="#999"/><rect x="2" y="3" width="5" height="8" fill="#2e7d6a"/><rect x="8" y="3" width="5" height="8" fill="#e0e0e0"/><rect x="11" y="3" width="2" height="3" fill="#6aa0d0"/></svg>
<div class="t" style="left:651px;top:291px;font-size:12px;color:#1a1a1a;">Anhänge</div>
<svg class="r" style="left:1439px;top:295px;" width="12" height="12" viewBox="0 0 12 12"><path d="M0.5 0.5L11.5 11.5M11.5 0.5L0.5 11.5" stroke="#222" stroke-width="1.1"/></svg>
<svg class="r" style="left:625px;top:320px;" width="14" height="14" viewBox="0 0 14 14"><circle cx="7" cy="7" r="6.5" fill="#1e8a2a"/><path d="M7 3.5V10.5M3.5 7H10.5" stroke="#fff" stroke-width="2"/></svg>
<svg class="r" style="left:648px;top:320px;" width="14" height="14" viewBox="0 0 14 14"><path d="M1 13L2 9.5L10 1.5L12.5 4L4.5 12Z" fill="#f5a30f"/></svg>
<svg class="r" style="left:672px;top:320px;" width="11" height="13" viewBox="0 0 11 13"><path d="M0.5 2H10.5M3.5 2V0.5H7.5V2" stroke="#f06050" stroke-width="1.3" fill="none"/><path d="M1.5 3.5H9.5L8.8 12.5H2.2Z" fill="#f06050"/><path d="M3.8 6L7.2 9.5M7.2 6L3.8 9.5" stroke="#fff" stroke-width="1.1"/></svg>
<svg class="r" style="left:694px;top:322px;" width="13" height="10" viewBox="0 0 13 10"><path d="M1 5L4.5 8.5L12 1" fill="none" stroke="#a0a0a0" stroke-width="1.6"/></svg>
<svg class="r" style="left:717px;top:322px;" width="14" height="10" viewBox="0 0 14 10"><path d="M1.5 1V6.5H7" fill="none" stroke="#a0a0a0" stroke-width="1.6"/><path d="M2 6C4 2.5 9.5 2 12.8 8" fill="none" stroke="#a0a0a0" stroke-width="1.6"/></svg>
<svg class="r" style="left:741px;top:321px;" width="13" height="12" viewBox="0 0 13 12"><circle cx="5" cy="5" r="4" fill="none" stroke="#2a5fd8" stroke-width="1.8"/><path d="M8 8L12 11.5" stroke="#2a5fd8" stroke-width="2"/></svg>
<svg class="r" style="left:762px;top:319px;" width="17" height="16" viewBox="0 0 17 16"><path d="M0.7 14V2.2Q0.7 1 1.8 1H5.8L7.3 2.5H11.5V7" fill="#f7cf45" stroke="#a64b00" stroke-width="1"/><path d="M0.7 14L3.6 7.3H15.6L12.6 14Z" fill="#f5b51c" stroke="#a64b00" stroke-width="1"/><path d="M8.6 8L12.6 4" stroke="#a32000" stroke-width="3.4"/><path d="M8.6 8L12.6 4" stroke="#ff8a1f" stroke-width="1.8"/><path d="M10.2 1.2H15.6V6.6Z" fill="#ff8a1f" stroke="#a32000" stroke-width="0.9" stroke-linejoin="round"/></svg>
<div class="r" style="left:621px;top:338px;width:839px;height:261px;background:#ebebeb;"></div>
<div class="r" style="left:626px;top:343px;width:412px;height:214px;background:#ffffff;"></div>
<div class="r" style="left:626px;top:361px;width:404px;height:1px;background:#eeeeee;"></div>
<div class="r" style="left:626px;top:380px;width:404px;height:1px;background:#eeeeee;"></div>
<div class="r" style="left:626px;top:399px;width:404px;height:1px;background:#eeeeee;"></div>
<div class="r" style="left:626px;top:418px;width:404px;height:1px;background:#eeeeee;"></div>
<div class="r" style="left:626px;top:437px;width:404px;height:1px;background:#eeeeee;"></div>
<div class="r" style="left:626px;top:456px;width:404px;height:1px;background:#eeeeee;"></div>
<div class="r" style="left:626px;top:475px;width:404px;height:1px;background:#eeeeee;"></div>
<div class="r" style="left:626px;top:494px;width:404px;height:1px;background:#eeeeee;"></div>
<div class="r" style="left:626px;top:513px;width:404px;height:1px;background:#eeeeee;"></div>
<div class="r" style="left:626px;top:532px;width:404px;height:1px;background:#eeeeee;"></div>
<div class="r" style="left:626px;top:551px;width:404px;height:1px;background:#eeeeee;"></div>
<div class="r" style="left:651px;top:343px;width:1px;height:214px;background:#dde6f0;"></div>
<div class="r" style="left:736px;top:343px;width:1px;height:214px;background:#dde6f0;"></div>
<div class="r" style="left:1030px;top:343px;width:1px;height:214px;background:#dde6f0;"></div>
<div class="r" style="left:626px;top:343px;width:404px;height:18px;background:#cce8ff;border-top:1px solid #1a7fd6;border-left:1px solid #1a7fd6;border-right:1px solid #1a7fd6;box-sizing:border-box;"></div>
<div class="r" style="left:651px;top:344px;width:1px;height:17px;background:#e8f2fc;"></div>
<div class="r" style="left:736px;top:344px;width:1px;height:17px;background:#e8f2fc;"></div>
<svg class="r" style="left:630px;top:344px;" width="16" height="16" viewBox="0 0 16 16"><g transform="translate(8.0,8.0) rotate(-45) scale(0.86)"><path d="M3.2 3.1H-6.2A2.9 2.9 0 0 1 -6.2 -2.7H6.6A2.5 2.5 0 0 1 6.6 2.3H-4.7A1.1 1.1 0 0 1 -4.7 0.1H3.8" fill="none" stroke="#555" stroke-width="1.15"/></g></svg>
<div class="t" style="left:657px;top:343px;font-size:12px;color:#111;letter-spacing:-0.6px;">14.10.2024</div>
<svg class="r" style="left:737px;top:346px;" width="15" height="12" viewBox="0 0 15 12"><rect x="0" y="0" width="15" height="11.6" fill="#000"/><rect x="7.6" y="1.5" width="5.9" height="8.6" fill="#fff"/><path d="M2.2 2.8H6.2V4.3L4.8 9.4H3.1L4.4 4.3H2.2Z" fill="#fff"/><path d="M8.6 3.9H12.6V5.1L10.3 8.2H12.6V9.3H8.6V8.1L10.9 5H8.6Z" fill="#000"/></svg>
<div class="t" style="left:760px;top:343px;font-size:12px;color:#111;">ZusagenFakturierung-26.zip</div>
<div class="t" style="left:631px;top:569px;font-size:18.67px;letter-spacing:0.12px;">Erfasst: 14.10.24 / kli</div>
<div class="t" style="left:1048px;top:350px;font-size:18.67px;">Name:</div>
<div class="t" style="left:1126px;top:350px;font-size:18.67px;font-weight:700;letter-spacing:0.55px;">ZusagenFakturierung-26.zip</div>
<div class="t" style="left:1048px;top:377px;font-size:18.67px;">Notiz:</div>
<div class="r" style="left:1433px;top:375px;width:17px;height:150px;background:#f0f0f0;border-left:1px solid #fafafa;box-sizing:border-box;"></div>
<svg class="r" style="left:1437px;top:380px;" width="9" height="6" viewBox="0 0 9 6"><path d="M0.5 5.5L4.5 0.5L8.5 5.5Z" fill="#a0a0a0"/></svg>
<svg class="r" style="left:1437px;top:514px;" width="9" height="6" viewBox="0 0 9 6"><path d="M0.5 0.5L4.5 5.5L8.5 0.5Z" fill="#a0a0a0"/></svg>
<div class="t" style="left:1048px;top:532px;font-size:18.67px;">Wichtig:</div>
<div class="r" style="left:1121px;top:534px;width:13px;height:13px;background:#ffffff;border:1px solid #c8c8c8;box-sizing:border-box;border-radius:2px;"></div>
<div class="t" style="left:1157px;top:532px;font-size:18.67px;">Privat:</div>
<div class="r" style="left:1213px;top:534px;width:13px;height:13px;background:#ffffff;border:1px solid #c8c8c8;box-sizing:border-box;border-radius:2px;"></div>
<div class="t" style="left:1248px;top:532px;font-size:18.67px;">Org. Einheit:</div>
<div class="r" style="left:1358px;top:613px;width:90px;height:23px;background:#ffffff;border:1px solid #d0d0d0;box-sizing:border-box;border-radius:4px;"></div>
<div class="t" style="left:1376px;top:615px;font-size:12px;color:#111;">Schließen</div>
<div class="t" style="left:3px;top:1006px;font-size:11.2px;color:#111;">Erfasst: 14.10.24 / kli</div>
<div class="r" style="left:1775px;top:1012px;width:1px;height:2px;background:#999;"></div>
<div class="r" style="left:1893px;top:1012px;width:1px;height:2px;background:#999;"></div>
<div class="r" style="left:1775px;top:1016px;width:1px;height:2px;background:#999;"></div>
<div class="r" style="left:1893px;top:1016px;width:1px;height:2px;background:#999;"></div>
<div class="r" style="left:1775px;top:1020px;width:1px;height:2px;background:#999;"></div>
<div class="r" style="left:1893px;top:1020px;width:1px;height:2px;background:#999;"></div>
<div class="r" style="left:1775px;top:1024px;width:1px;height:2px;background:#999;"></div>
<div class="r" style="left:1893px;top:1024px;width:1px;height:2px;background:#999;"></div>
<div class="t" style="left:1782px;top:1009px;font-size:18.67px;">Standard / kli</div>
<svg class="r" style="left:1900px;top:1010px;" width="15" height="15" viewBox="0 0 15 15"><circle cx="7.5" cy="7.5" r="6.5" fill="none" stroke="#222" stroke-width="1.2"/><path d="M7.5 6.5V11.5" stroke="#222" stroke-width="1.5"/><circle cx="7.5" cy="4.2" r="0.9" fill="#222"/></svg>
</body></html>
